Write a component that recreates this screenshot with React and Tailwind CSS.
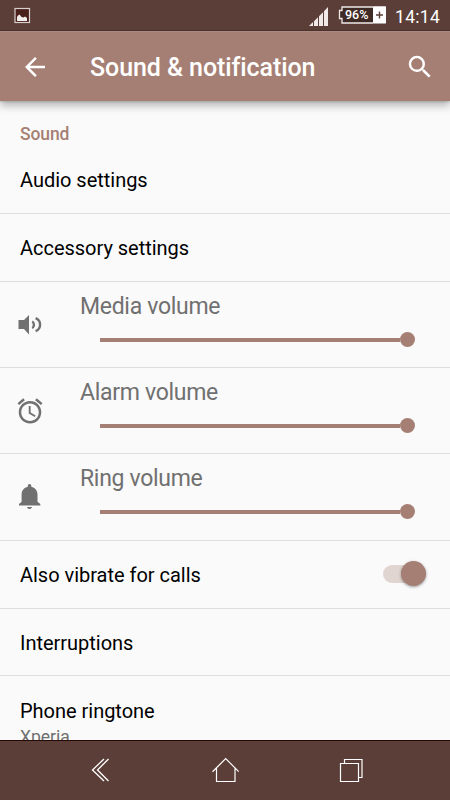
import { MdArrowBack, MdSearch } from 'react-icons/md';

const SpeakerIcon = () => (
  <svg width="24" height="20" viewBox="0 0 24 20">
    <path d="M.5 5H6l5-5v19.5L6 14H.5z" fill="#707070" />
    <path d="M14.2 6.5c2.3 1.2 2.3 5.4 0 6.6" fill="none" stroke="#707070" strokeWidth="2.4" />
    <path d="M17.6 3.2c6 2.4 6 10.6 0 13" fill="none" stroke="#707070" strokeWidth="2.4" />
  </svg>
);

const AlarmIcon = () => (
  <svg width="30" height="30" viewBox="0 0 24 24" fill="#707070">
    <path d="M22 5.72l-4.6-3.86-1.29 1.53 4.6 3.86L22 5.72zM7.88 3.39L6.6 1.86 2 5.71l1.29 1.53 4.59-3.85zM12.5 8H11v6l4.75 2.85.75-1.23-4-2.37V8zM12 4c-4.97 0-9 4.03-9 9s4.02 9 9 9a9 9 0 0 0 0-18zm0 16c-3.87 0-7-3.13-7-7s3.13-7 7-7 7 3.13 7 7-3.13 7-7 7z" />
  </svg>
);

const BellIcon = () => (
  <svg width="22" height="26" viewBox="0 0 22 26" fill="#707070">
    <path d="M10.5 0c1.1 0 1.8.8 1.8 1.9v.8c3.7.9 6.2 3.9 6.2 7.8v7.3l2.8 2.3v1.4H0v-1.4l2.6-2.3v-7.3c0-3.9 2.5-6.9 6.2-7.8v-.8c0-1.1.7-1.9 1.7-1.9z" />
    <path d="M8 23h5c-.2 1.3-1.2 2-2.5 2S8.200 24.300 8 23z" />
  </svg>
);

const StatusBar = () => (
  <div className="h-[31px] shrink-0 bg-[#5b3e38] border-b border-[#4e342f] flex items-center text-white">
    <svg className="ml-[14px]" width="17" height="17" viewBox="0 0 17 17">
      <rect x="1" y="1.5" width="14.5" height="14" fill="#4a201b" stroke="#d8d0ce" strokeWidth="1.2" />
      <path d="M3 14v-4l1-1.5 1.5-1 2 2.5 2 .5L11 9.5l2 1.500V14z" fill="#f2eeed" />
    </svg>
    <svg className="ml-auto mt-[2px]" width="20" height="19" viewBox="0 0 20 19" fill="#f1e9e8">
      <path d="M0 19L4 15v4zM5 14.2L9 10.2V19H5zM10 9.2L14 5.2V19h-4zM15 4.3L19 0v19h-4z" />
    </svg>
    <div className="relative ml-[9px] w-[49px] h-[18px]">
      <svg width="49" height="18" viewBox="0 0 49 18">
        <path d="M35 1H4v3.5H1.5v8H4V17h31" fill="#3f2a26" stroke="#eee9e8" strokeWidth="1.3" />
        <rect x="35" y="0.3" width="13" height="17.3" rx="0.7" fill="#fff" />
        <path d="M38 9h7M41.5 5.5v7" stroke="#5b3e38" strokeWidth="1.4" />
      </svg>
      <span className="absolute left-[7px] top-0 text-[12.5px] leading-[18px] font-medium">96%</span>
    </div>
    <span className="w-[45px] ml-[8px] mr-[10px] mt-[3px] text-[17.5px] leading-5 tracking-[0.3px] whitespace-nowrap">14:14</span>
  </div>
);

const AppBar = () => (
  <div className="relative z-10 h-[70px] shrink-0 bg-[#a67f74] border-t border-[#ad897f] flex items-center text-white shadow-[0_5px_8px_rgba(0,0,0,0.26),0_1px_2px_rgba(0,0,0,0.16)]">
    <MdArrowBack size={30} className="ml-5" />
    <h1 className="ml-10 mt-[2px] text-[25px] leading-8 font-medium tracking-[-0.08px] whitespace-nowrap">Sound &amp; notification</h1>
    <MdSearch size={30} className="ml-auto mr-[15px]" />
  </div>
);

const SettingRow = ({ label, className = 'h-[68px]', children }) => (
  <div className={`${className} shrink-0 border-b border-[#dedede] flex items-center justify-between pl-5 pr-6`}>
    <span className="text-[20px] leading-6 tracking-[-0.02px] text-black">{label}</span>
    {children}
  </div>
);

const VolumeRow = ({ label, icon, className = 'h-[86px]' }) => (
  <div className={`${className} shrink-0 border-b border-[#dedede] flex`}>
    <div className="w-20 pl-[15px] flex items-center">
      <div className="w-[30px] flex justify-center">{icon}</div>
    </div>
    <div className="flex-1 pt-[11px]">
      <div className="text-[23px] leading-7 tracking-[-0.3px] text-[#707070]">{label}</div>
      <div className="ml-5 mt-[11px] flex items-center h-[15px]">
        <div className="w-[300px] h-1 bg-[#a67f74]" />
        <div className="size-[15px] rounded-full bg-[#a67f74]" />
      </div>
    </div>
  </div>
);

const Toggle = () => (
  <div className="w-[43px] h-[18px] -mt-[2px] rounded-full bg-[#e1d5d1] flex items-center justify-end">
    <div className="size-[25px] rounded-full bg-[#a67f74] shadow-[0_1px_3px_rgba(0,0,0,0.4)]" />
  </div>
);

const NavBar = () => (
  <div className="h-[60px] shrink-0 bg-[#5b3e38] border-t border-[#260805] flex pl-[87px] pt-[15px]">
    <svg width="28" height="28" viewBox="0 0 28 28" fill="none" stroke="#fff" strokeWidth="1.3">
      <path d="M17 3L5.5 14 17 25M21.5 3l-11 11 11 11" />
    </svg>
    <svg className="ml-[97px]" width="28" height="28" viewBox="0 0 28 28" fill="none" stroke="#fff" strokeWidth="1.2">
      <path d="M.5 15.7L13.7 2.6l13 13.1M4.5 12v13.5H23V12" />
    </svg>
    <svg className="ml-[97px]" width="28" height="28" viewBox="0 0 28 28" fill="none" stroke="#fff" strokeWidth="1.2">
      <path d="M3.5 7.5h18v18h-18zM7.5 7.500v-4H25v18h-3.5" />
    </svg>
  </div>
);

const App = () => {
  return (
    <div className="w-[450px] h-[800px] overflow-hidden flex flex-col bg-[#fafafa] font-[Roboto,sans-serif]">
      <StatusBar />
      <AppBar />

      {/* Settings list, clipped by the navigation bar */}
      <div className="flex-1 min-h-0 overflow-hidden flex flex-col">
        <h2 className="h-[45px] shrink-0 pl-5 pt-[22px] text-[17.5px] leading-[22px] font-medium tracking-[-0.1px] text-[#a67f74]">Sound</h2>
        <SettingRow label="Audio settings" />
        <SettingRow label="Accessory settings" />
        <VolumeRow label="Media volume" icon={<SpeakerIcon />} />
        <VolumeRow label="Alarm volume" icon={<AlarmIcon />} />
        <VolumeRow label="Ring volume" icon={<BellIcon />} className="h-[87px]" />
        <SettingRow label="Also vibrate for calls">
          <Toggle />
        </SettingRow>
        <SettingRow label="Interruptions" className="h-[67px] pt-[2px]" />
        <div className="pl-5 pt-[23px] shrink-0">
          <div className="text-[20px] leading-6 tracking-[-0.02px] text-black">Phone ringtone</div>
          <div className="mt-[4px] text-[17.5px] leading-5 text-[#707070]">Xperia</div>
        </div>
      </div>

      <NavBar />
    </div>
  );
};

export default App;
